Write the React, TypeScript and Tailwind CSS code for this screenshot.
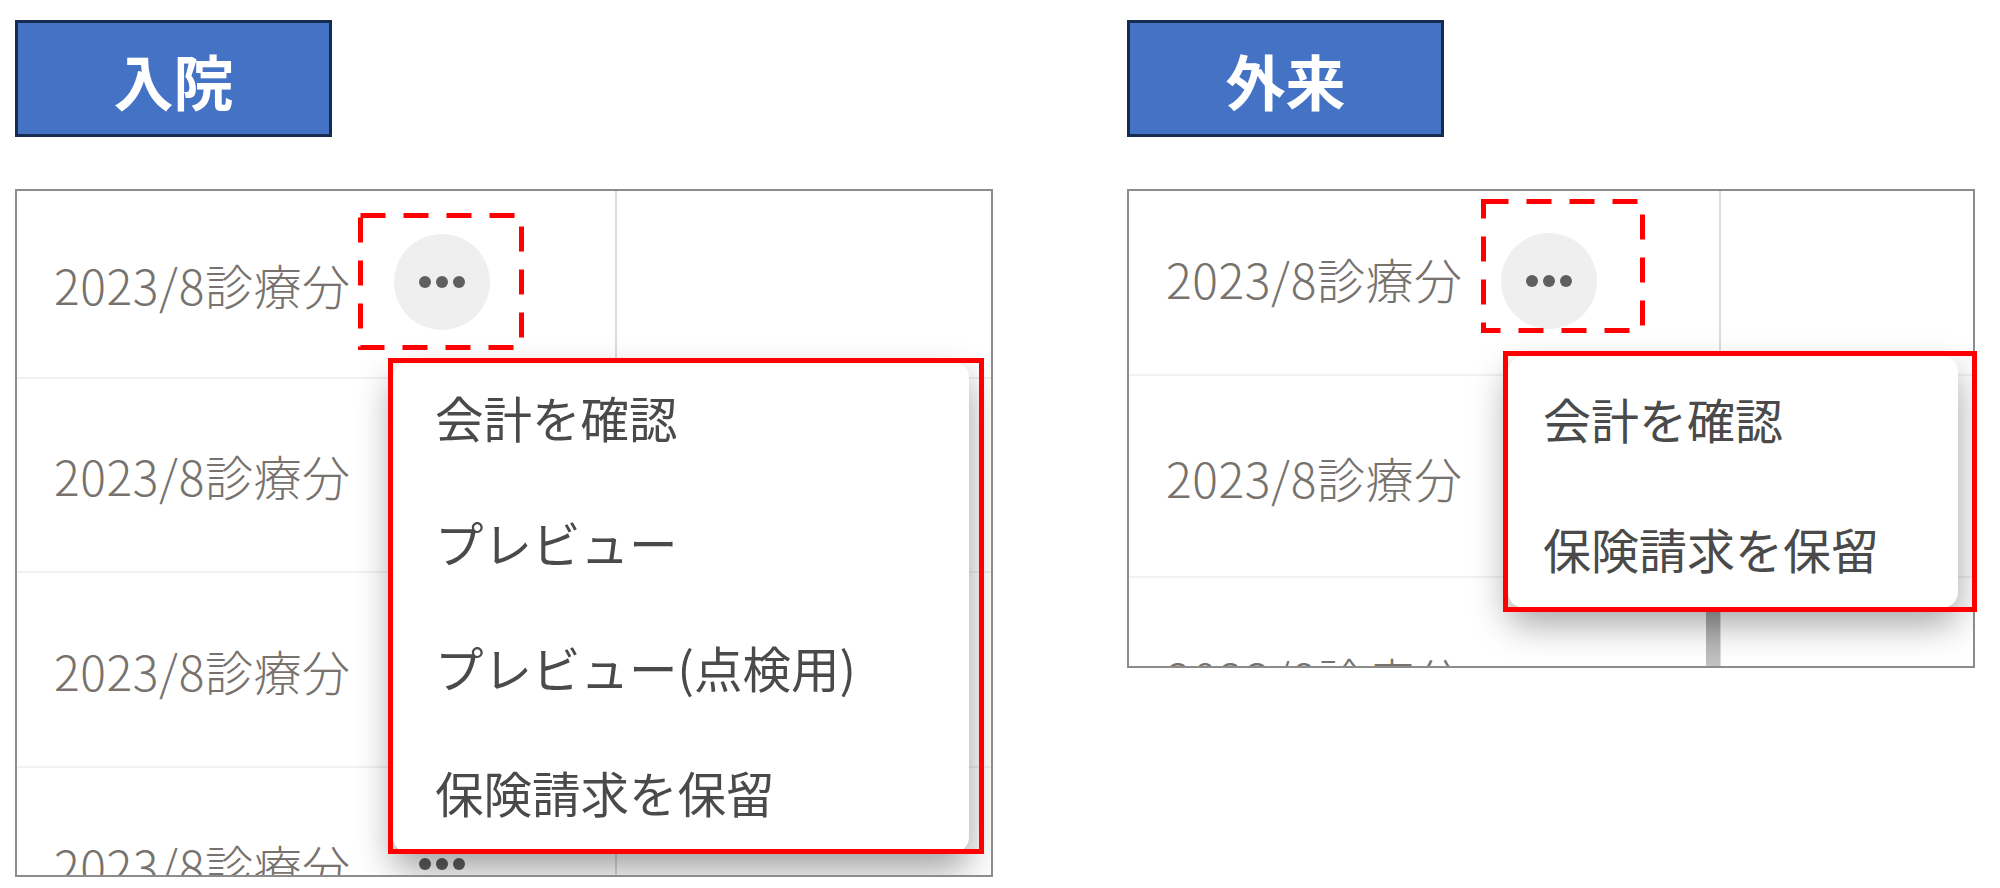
const font = { fontFamily: '"Noto Sans CJK JP", "Noto Sans", sans-serif' };

function Dots() {
  return (
    <svg width="46" height="14" viewBox="0 0 46 14" className="block">
      <circle cx="6" cy="7" r="6" fill="#5f5f5f" />
      <circle cx="23" cy="7" r="6" fill="#5f5f5f" />
      <circle cx="40" cy="7" r="6" fill="#5f5f5f" />
    </svg>
  );
}

function Dashed({ w, h }: { w: number; h: number }) {
  return (
    <svg width={w} height={h} className="absolute left-0 top-0">
      <rect x="2.5" y="2.5" width={w - 5} height={h - 5} fill="none" stroke="#ff0000" strokeWidth="5" strokeDasharray="25 18" />
    </svg>
  );
}

function Title({ text, width }: { text: string; width: string }) {
  return (
    <div className={`${width} h-[117px] box-border border-[3px] border-[#172c51] bg-[#4472c4] flex items-center justify-center pt-[2px] text-[60px] font-bold text-white leading-none`}>
      {text}
    </div>
  );
}

export default function App() {
  const dateText = "text-[48px] leading-none font-light text-[#77726d] tracking-[0.6px] whitespace-nowrap";
  const menuItem = "flex items-center leading-none font-normal text-[#4a4a4a] whitespace-nowrap shrink-0";
  return (
    <div className="w-[2000px] h-[888px] bg-white flex gap-[134px] pl-[15px] pt-[20px] overflow-hidden" style={font}>
      {/* 入院 */}
      <div className="w-[978px] flex flex-col gap-[52px]">
        <Title text="入院" width="w-[317px]" />
        <div className="relative h-[688px]">
          <div className="relative h-full box-border border-2 border-[#8c8c8c] overflow-hidden">
            <div className="flex h-[188px] border-b-2 border-[#f1f1f1] box-border">
              <div className="w-[600px] flex items-center border-r-2 border-[#dcdcdc] pl-[37px] box-border">
                <span className={`${dateText} w-[340px]`}>2023/8診療分</span>
                <div className="w-[96px] h-[96px] rounded-full bg-[#efefef] flex items-center justify-center mt-[-4px]">
                  <Dots />
                </div>
              </div>
            </div>
            <div className="flex h-[194px] border-b-2 border-[#f1f1f1] box-border">
              <div className="w-[600px] flex items-center border-r-2 border-[#dcdcdc] pl-[37px] box-border">
                <span className={dateText}>2023/8診療分</span>
              </div>
            </div>
            <div className="flex h-[195px] border-b-2 border-[#f1f1f1] box-border">
              <div className="w-[600px] flex items-center border-r-2 border-[#dcdcdc] pl-[37px] pt-[1px] box-border">
                <span className={dateText}>2023/8診療分</span>
              </div>
            </div>
            <div className="flex h-[195px] box-border">
              <div className="w-[600px] flex items-start border-r-2 border-[#dcdcdc] pl-[37px] pt-[73px] box-border">
                <span className={`${dateText} w-[340px]`}>2023/8診療分</span>
                <div className="w-[96px] flex justify-center pt-[16px]">
                  <Dots />
                </div>
              </div>
            </div>
            <div className="absolute left-[376px] top-[171px] w-[576px] h-[491px] rounded-[16px] bg-white shadow-[0_16px_36px_rgba(0,0,0,0.38)] flex flex-col justify-center pl-[42px] pb-[5px] text-[48.5px]">
              <div className={`${menuItem} h-[125px]`}>会計を確認</div>
              <div className={`${menuItem} h-[125px]`}>プレビュー</div>
              <div className={`${menuItem} h-[125px]`}>プレビュー(点検用)</div>
              <div className={`${menuItem} h-[125px]`}>保険請求を保留</div>
            </div>
          </div>
          <div className="absolute left-[343px] top-[24px] w-[166px] h-[137px]">
            <Dashed w={166} h={137} />
          </div>
          <div className="absolute left-[373px] top-[169px] w-[596px] h-[496px] box-border border-[5px] border-[#ff0000]" />
        </div>
      </div>

      {/* 外来 */}
      <div className="w-[848px] flex flex-col gap-[52px]">
        <Title text="外来" width="w-[317px]" />
        <div className="relative h-[479px]">
          <div className="relative h-full box-border border-2 border-[#8c8c8c] overflow-hidden">
            <div className="flex h-[185px] border-b-2 border-[#f1f1f1] box-border">
              <div className="w-[592px] flex items-center border-r-2 border-[#dcdcdc] pl-[37px] box-border">
                <span className={`${dateText} w-[335px] mt-[-10px]`}>2023/8診療分</span>
                <div className="w-[96px] h-[96px] rounded-full bg-[#efefef] flex items-center justify-center mt-[-4px]">
                  <Dots />
                </div>
              </div>
            </div>
            <div className="flex h-[202px] border-b-2 border-[#f1f1f1] box-border">
              <div className="w-[592px] flex items-center border-r-2 border-[#dcdcdc] pl-[37px] pt-[2px] box-border">
                <span className={dateText}>2023/8診療分</span>
              </div>
            </div>
            <div className="flex h-[120px] box-border">
              <div className="w-[592px] border-r-2 border-[#dcdcdc] pl-[37px] pt-[76px] box-border">
                <span className={dateText}>2023/8診療分</span>
              </div>
            </div>
            <div className="absolute left-[577px] top-[421px] w-[14px] h-[56px] bg-gradient-to-b from-[#a8a8a8] to-[#c4c4c4]" />
            <div className="absolute left-[379px] top-[165px] w-[450px] h-[252px] rounded-[16px] bg-white shadow-[0_16px_36px_rgba(0,0,0,0.36)] flex flex-col justify-center pl-[35px] pt-[1px] text-[48px]">
              <div className={`${menuItem} h-[130px]`}>会計を確認</div>
              <div className={`${menuItem} h-[130px]`}>保険請求を保留</div>
            </div>
          </div>
          <div className="absolute left-[354px] top-[10px] w-[164px] h-[134px]">
            <Dashed w={164} h={134} />
          </div>
          <div className="absolute left-[376px] top-[162px] w-[474px] h-[261px] box-border border-[5px] border-[#ff0000]" />
        </div>
      </div>
    </div>
  );
}
